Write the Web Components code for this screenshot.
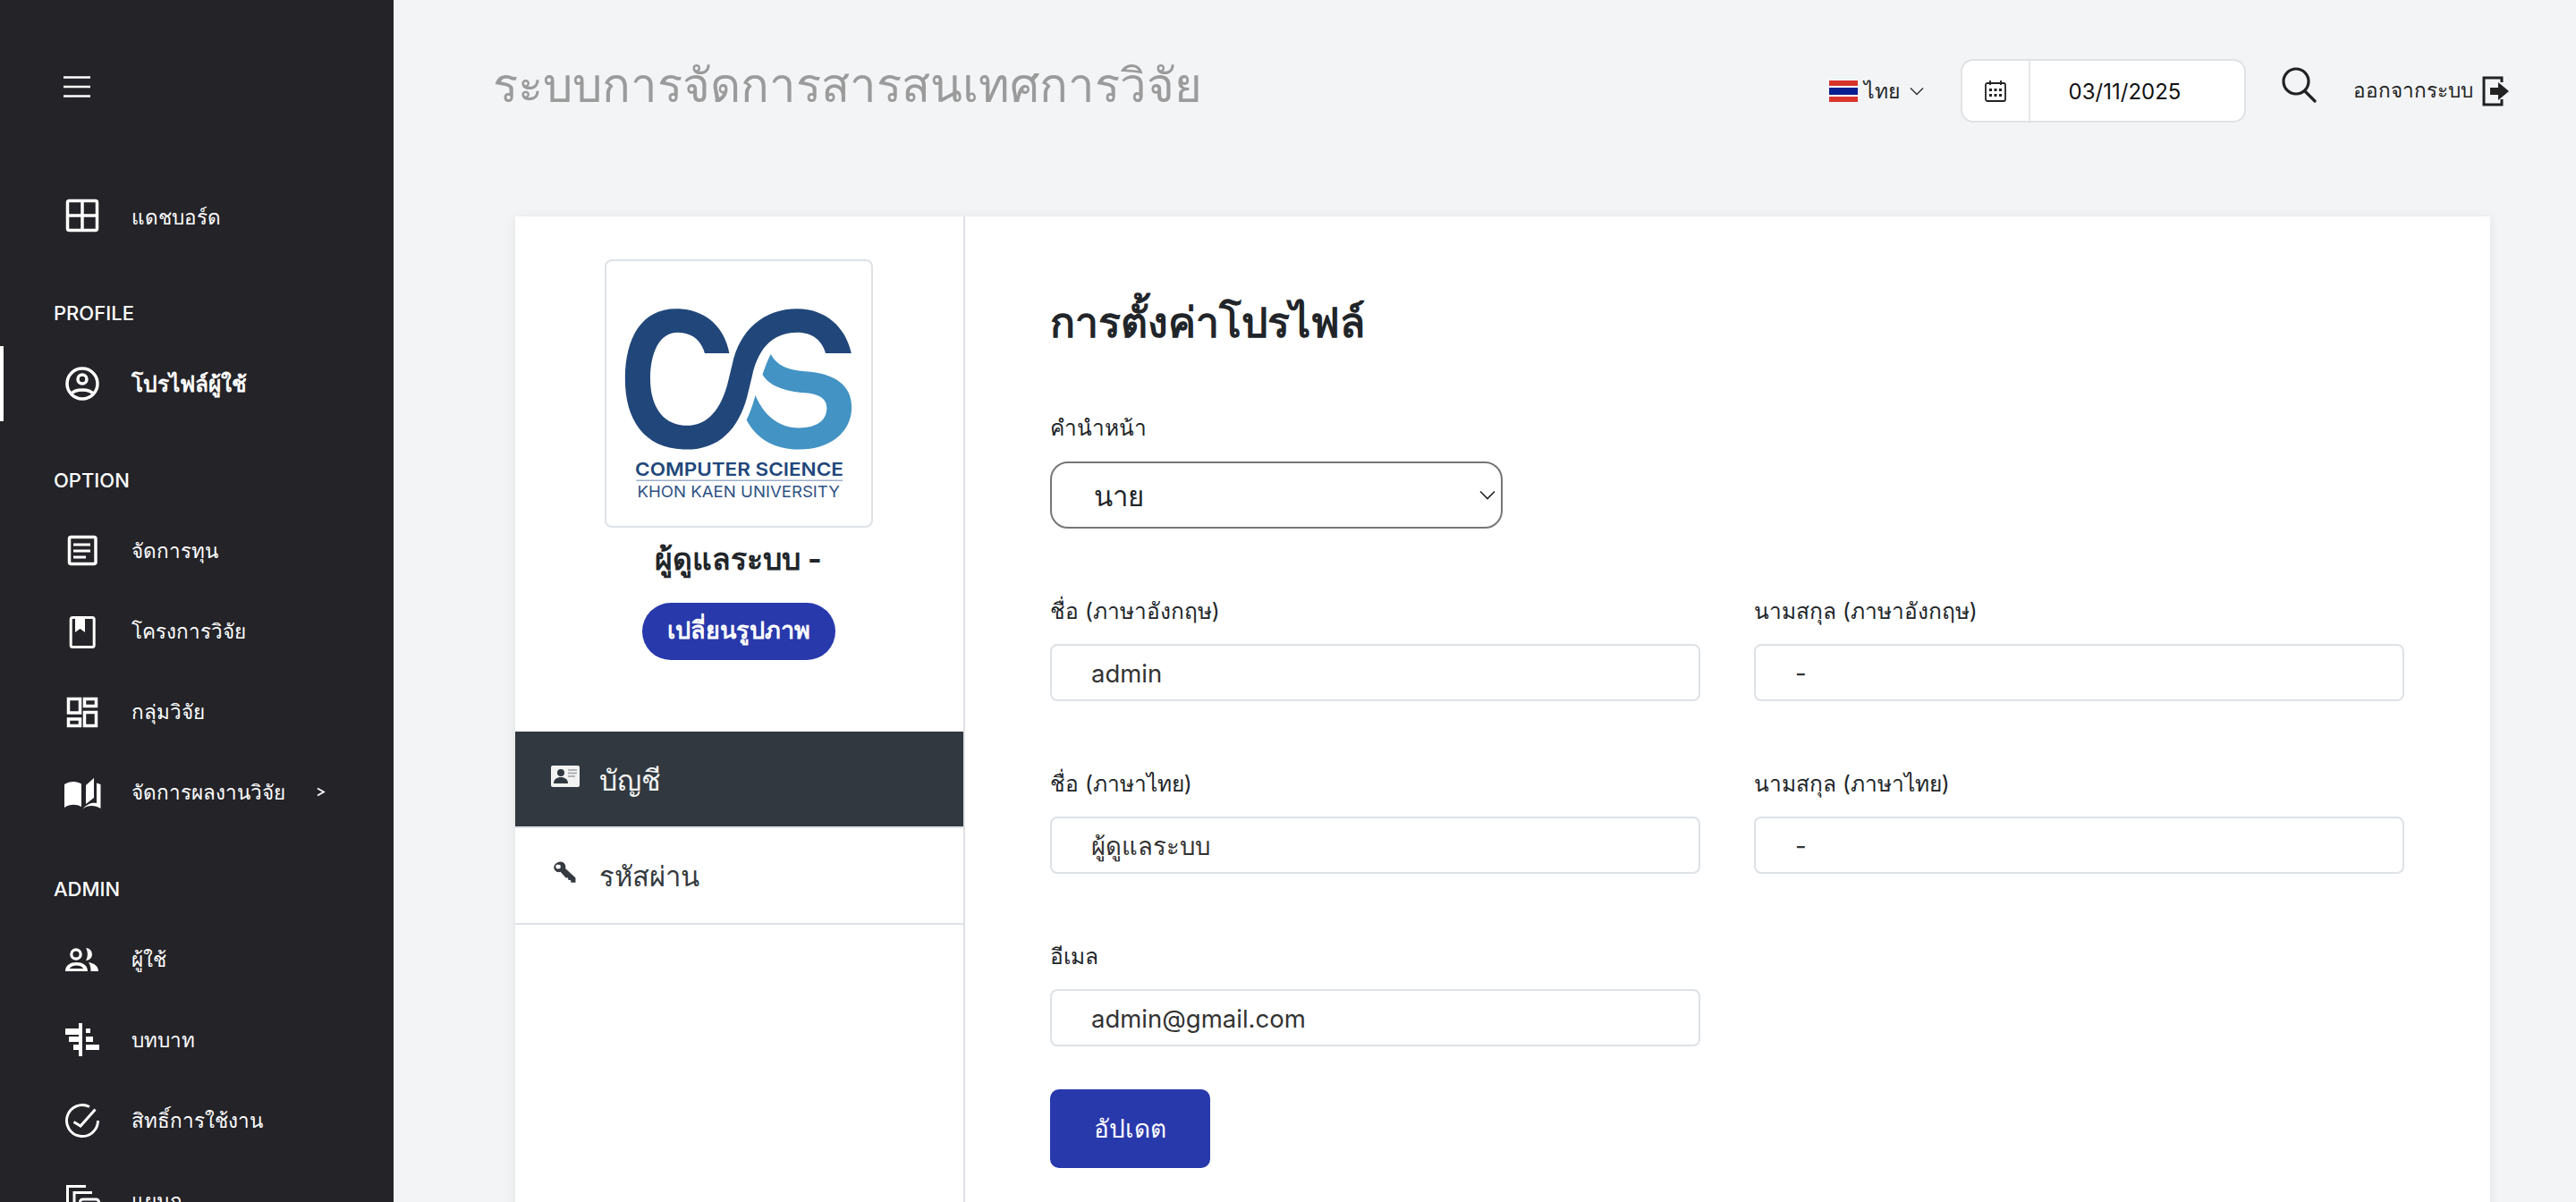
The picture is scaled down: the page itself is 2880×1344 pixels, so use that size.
<!DOCTYPE html>
<html lang="th">
<head>
<meta charset="utf-8">
<title>ระบบการจัดการสารสนเทศการวิจัย</title>
<style>
    html, body { margin: 0; height: 1344px; overflow: hidden; }
    body {
        background: #f3f4f6;
        color: #212529;
        font-family: "Inter", "Liberation Sans", sans-serif;
    }
</style>
</head>
<body>
<app-shell>
    <side-bar slot="side">
        <side-item icon="grid" label="แดชบอร์ด"></side-item>
        <side-section label="PROFILE" style="margin-top:50px">
            <side-item icon="account" label="โปรไฟล์ผู้ใช้" active></side-item>
        </side-section>
        <side-section label="OPTION" style="margin-top:51px">
            <side-item icon="article" label="จัดการทุน"></side-item>
            <side-item icon="bookmark" label="โครงการวิจัย"></side-item>
            <side-item icon="panels" label="กลุ่มวิจัย"></side-item>
            <side-item icon="book" label="จัดการผลงานวิจัย" arrow></side-item>
        </side-section>
        <side-section label="ADMIN" style="margin-top:51px">
            <side-item icon="people" label="ผู้ใช้"></side-item>
            <side-item icon="roles" label="บทบาท"></side-item>
            <side-item icon="check" label="สิทธิ์การใช้งาน"></side-item>
            <side-item icon="layers" label="แผนก"></side-item>
        </side-section>
    </side-bar>
    <top-bar slot="top" heading="ระบบการจัดการสารสนเทศการวิจัย"></top-bar>
    <profile-card slot="main">
        <profile-aside slot="aside" name="ผู้ดูแลระบบ -" action="เปลี่ยนรูปภาพ">
            <profile-tab icon="card" label="บัญชี" active></profile-tab>
            <profile-tab icon="key" label="รหัสผ่าน"></profile-tab>
        </profile-aside>
        <profile-form heading="การตั้งค่าโปรไฟล์" submit="อัปเดต">
            <form-field slot="title" label="คำนำหน้า" value="นาย" select></form-field>
            <form-field label="ชื่อ (ภาษาอังกฤษ)" value="admin"></form-field>
            <form-field label="นามสกุล (ภาษาอังกฤษ)" value="-"></form-field>
            <form-field label="ชื่อ (ภาษาไทย)" value="ผู้ดูแลระบบ"></form-field>
            <form-field label="นามสกุล (ภาษาไทย)" value="-"></form-field>
            <form-field label="อีเมล" value="admin@gmail.com"></form-field>
        </profile-form>
    </profile-card>
</app-shell>

<script>
// sidebar icons, drawn on a 44x44 box
const sideIcons = {
    grid: `<g fill="none" stroke="#fff" stroke-width="3.500"><rect x="5.5" y="3.500" width="33" height="33" rx="2"/><path d="M22 3.500v33M5.5 20h33"/></g>`,
    account: `<g fill="none" stroke="#fff" stroke-width="3.500"><circle cx="22" cy="22" r="17"/><circle cx="22" cy="17" r="5"/><path d="M9.500 33.500C14 27.500 30 27.500 34.500 33.500"/></g>`,
    article: `<g fill="none" stroke="#fff"><rect x="7.500" y="6.500" width="29.500" height="30" rx="2" stroke-width="3.500"/><path d="M12 15h19M12 22h19M12 29h14" stroke-width="3"/></g>`,
    bookmark: `<rect x="9.200" y="6.500" width="26" height="33" rx="2" fill="none" stroke="#fff" stroke-width="3"/><path d="M14 6h11v17l-5.500-4-5.500 4z" fill="#fff"/>`,
    panels: `<g fill="none" stroke="#fff" stroke-width="3.500"><rect x="6.500" y="7.500" width="13" height="15.500"/><rect x="24.500" y="7.500" width="13" height="8"/><rect x="6.500" y="30" width="13" height="7.500"/><rect x="24.500" y="22.500" width="13" height="15"/></g>`,
    book: `<g fill="#fff"><path d="M2 13C8 9 16 9 21 12.500V38C15 35 8 35 2 39z"/><path d="M26 14L35 6V28L26 35z"/><path d="M38 11.500C40 12 41 12.500 42.500 13V40C36 36 28 36 22.500 40.500 28 34 34 33 38 34z"/></g>`,
    people: `<g fill="#fff"><circle cx="15" cy="16" r="5.200" fill="none" stroke="#fff" stroke-width="3.200"/><path d="M26 9a7 7 0 1 1 0 14C28.500 19 28.500 13 26 9z"/><path fill-rule="evenodd" d="M3 35C3 28 9 25 15.500 25S28 28 28 35zM7.500 32h16C21.500 29.500 18.500 28.500 15.500 28.500S9.500 29.500 7.500 32z"/><path d="M29 25C35 26 40 29 40 35H31.500C31.500 31 31 28 29 25z"/></g>`,
    roles: `<g fill="#fff"><rect x="18" y="3" width="4" height="37"/><rect x="3" y="9" width="15" height="7"/><rect x="7" y="18" width="11" height="6"/><rect x="12" y="27" width="6" height="6"/><rect x="26" y="9" width="5" height="5"/><rect x="26" y="18" width="8" height="6"/><rect x="26" y="27" width="15" height="6"/></g>`,
    check: `<g fill="none" stroke="#fff" stroke-width="3"><path d="M39.500 22A17.500 17.500 0 1 1 30 6.500"/><path d="M12.500 23.500L20 28 36.500 9.500"/></g>`,
    layers: `<g fill="none" stroke="#fff" stroke-width="3"><path d="M26 5.500H5.500V37"/><path d="M33 12.500H13V37"/><rect x="19.500" y="20" width="21" height="16" rx="3"/></g>`
}

class AppShell extends HTMLElement {
    constructor() {
        super()
        this.attachShadow({mode: "open"}).innerHTML = `
            <style>
                :host { display: flex; width: 2880px; height: 1344px; overflow: hidden; }
                .content { flex: 1; min-width: 0; display: flex; flex-direction: column; }
            </style>
            <slot name="side"></slot>
            <div class="content">
                <slot name="top"></slot>
                <slot name="main"></slot>
            </div>
        `
    }
}

class SideBar extends HTMLElement {
    constructor() {
        super()
        this.attachShadow({mode: "open"}).innerHTML = `
            <style>
                :host {
                    display: block;
                    flex: none;
                    width: 440px;
                    height: 1344px;
                    overflow: hidden;
                    background: #232328;
                    color: #fff;
                }
                .burger {
                    display: block;
                    width: 30px;
                    height: 24px;
                    margin: 85px 0 92px 71px;
                }
            </style>
            <svg class="burger" viewBox="0 0 30 24" fill="none" stroke="#fff" stroke-width="2.500">
                <path d="M0 1.500h30M0 12h30M0 22.500h30"/>
            </svg>
            <slot></slot>
        `
    }
}

class SideSection extends HTMLElement {
    constructor() {
        super()
        this.attachShadow({mode: "open"}).innerHTML = `
            <style>
                :host { display: block; }
                .label {
                    height: 30px;
                    line-height: 30px;
                    margin: 0 0 22px 60px;
                    font-size: 22px;
                    font-weight: 500;
                }
                .list { display: flex; flex-direction: column; gap: 6px; }
            </style>
            <div class="label">${this.getAttribute("label")}</div>
            <div class="list"><slot></slot></div>
        `
    }
}

class SideItem extends HTMLElement {
    constructor() {
        super()
        this.attachShadow({mode: "open"}).innerHTML = `
            <style>
                :host {
                    display: flex;
                    align-items: center;
                    height: 84px;
                    padding-left: 70px;
                    box-sizing: border-box;
                    font-size: 22.5px;
                    position: relative;
                }
                :host([active]) { font-weight: 600; font-size: 24.5px; }
                :host([active])::before {
                    content: "";
                    position: absolute;
                    left: 0;
                    top: 0;
                    bottom: 0;
                    width: 4px;
                    background: #fff;
                }
                svg.icon { width: 44px; height: 44px; flex: none; overflow: visible; }
                .text { margin-left: 33px; white-space: nowrap; }
                .arrow { position: absolute; left: 353px; top: 27px; width: 12px; height: 30px; }
            </style>
            <svg class="icon" viewBox="0 0 44 44">${sideIcons[this.getAttribute("icon")]}</svg>
            <span class="text">${this.getAttribute("label")}</span>
            ${this.hasAttribute("arrow") ? `<svg class="arrow" viewBox="0 0 12 30" fill="none" stroke="#fff" stroke-width="1.800"><path d="M2 10.500l7 4-7 4"/></svg>` : ""}
        `
    }
}

class TopBar extends HTMLElement {
    constructor() {
        super()
        this.attachShadow({mode: "open"}).innerHTML = `
            <style>
                :host {
                    display: flex;
                    justify-content: space-between;
                    flex: none;
                    height: 242px;
                    box-sizing: border-box;
                    padding: 60px 75px 0 111px;
                }
                h1 {
                    margin: 0;
                    height: 70px;
                    line-height: 70px;
                    font-size: 52.7px;
                    font-weight: 400;
                    color: #9b9b9b;
                    white-space: nowrap;
                }
                .tools { display: flex; align-items: center; height: 71px; margin-top: 6px; }
                .lang { display: flex; align-items: center; width: 106px; font-size: 23px; }
                .lang .flag { width: 32px; height: 24px; flex: none; margin-right: 7px; }
                .lang .chev { width: 16px; height: 10px; margin-left: auto; }
                .date {
                    display: flex;
                    width: 319px;
                    height: 71px;
                    margin-left: 41px;
                    box-sizing: border-box;
                    background: #fff;
                    border: 2px solid #e1e2e4;
                    border-radius: 14px;
                }
                .date .cal {
                    display: flex;
                    align-items: center;
                    justify-content: center;
                    width: 74px;
                    border-right: 2px solid #e6e7e9;
                }
                .date .val { flex: 1; padding-right: 28px; text-align: center; line-height: 69px; font-size: 24px; color: #111; }
                .search { width: 40px; height: 40px; margin: -14px 0 0 39px; }
                .out {
                    display: flex;
                    align-items: center;
                    justify-content: space-between;
                    width: 174px;
                    margin: -2px 0 0 41px;
                    font-size: 22.5px;
                    color: #222;
                    white-space: nowrap;
                }
                .out svg { width: 30px; height: 34px; flex: none; margin-top: 2px; }
            </style>
            <h1>${this.getAttribute("heading")}</h1>
            <div class="tools">
                <div class="lang">
                    <svg class="flag" viewBox="0 0 32 24">
                        <rect width="32" height="24" fill="#fff"/>
                        <rect width="32" height="6" fill="#d9352a"/>
                        <rect y="18" width="32" height="6" fill="#d9352a"/>
                        <rect y="8" width="32" height="8" fill="#0a1f8f"/>
                    </svg>
                    <span>ไทย</span>
                    <svg class="chev" viewBox="0 0 16 10" fill="none" stroke="#333" stroke-width="1.500"><path d="M1 1.500l7 7 7-7"/></svg>
                </div>
                <div class="date">
                    <div class="cal">
                        <svg width="26" height="26" viewBox="0 0 26 26" fill="none" stroke="#222" stroke-width="1.800">
                            <rect x="2" y="4" width="22" height="20" rx="2"/>
                            <path d="M7 1v5M19 1v5"/>
                            <g fill="#222" stroke="none">
                                <rect x="6" y="10" width="3" height="3"/><rect x="11.500" y="10" width="3" height="3"/><rect x="17" y="10" width="3" height="3"/>
                                <rect x="6" y="16" width="3" height="3"/><rect x="11.500" y="16" width="3" height="3"/><rect x="17" y="16" width="3" height="3"/>
                            </g>
                        </svg>
                    </div>
                    <div class="val">03/11/2025</div>
                </div>
                <svg class="search" viewBox="0 0 40 40" fill="none" stroke="#222" stroke-width="3.200">
                    <circle cx="17" cy="16" r="14"/>
                    <path d="M27 27l11 11" stroke-linecap="round"/>
                </svg>
                <div class="out">
                    <span>ออกจากระบบ</span>
                    <svg viewBox="0 0 30 34">
                        <path d="M22 7V2H2v30h20v-6" fill="none" stroke="#222" stroke-width="3"/>
                        <path d="M9 13h9V7l12 10-12 10v-6H9z" fill="#222"/>
                    </svg>
                </div>
            </div>
        `
    }
}

class ProfileCard extends HTMLElement {
    constructor() {
        super()
        this.attachShadow({mode: "open"}).innerHTML = `
            <style>
                :host {
                    display: flex;
                    flex: 1;
                    width: 2208px;
                    min-height: 1200px;
                    margin-left: 136px;
                    background: #fff;
                    box-shadow: 0 2px 12px rgba(0,0,0,.08);
                }
                .aside { flex: none; width: 501px; border-right: 2px solid #dee2e6; }
                .body { flex: 1; min-width: 0; }
            </style>
            <div class="aside"><slot name="aside"></slot></div>
            <div class="body"><slot></slot></div>
        `
    }
}

class ProfileAside extends HTMLElement {
    constructor() {
        super()
        this.attachShadow({mode: "open"}).innerHTML = `
            <style>
                :host { display: block; }
                .top { display: flex; flex-direction: column; align-items: center; padding: 48px 2px 0 0; height: 576px; box-sizing: border-box; }
                .pic {
                    width: 300px;
                    height: 300px;
                    box-sizing: border-box;
                    border: 2px solid #dee2e6;
                    border-radius: 8px;
                    overflow: hidden;
                }
                .pic svg { display: block; width: 296px; height: 296px; }
                .name { margin-top: 10px; height: 50px; line-height: 50px; font-size: 33.7px; font-weight: 700; color: #212529; }
                .btn {
                    margin-top: 24px;
                    width: 216px;
                    height: 64px;
                    line-height: 62px;
                    text-align: center;
                    border-radius: 32px;
                    background: #2839ab;
                    color: #fff;
                    font-size: 27px;
                    font-weight: 600;
                }
            </style>
            <div class="top">
                <div class="pic">
                    <svg viewBox="320 152 894 894">
                        <path fill="#21477a" d="M735 463C718 370 650 313 555 313 440 313 383 410 383 550 383 690 450 788 590 788 700 788 765 720 795 610L812 540C830 460 870 393 965 393 1015 393 1048 420 1060 463H1147C1128 375 1060 313 965 313 850 313 770 385 745 500L728 570C705 650 665 707 590 707 510 707 468 640 468 550 468 460 500 393 560 393 610 393 640 420 652 463z"/>
                        <path fill="#4393c4" d="M875 466C895 505 935 520 990 524 1090 530 1148 570 1148 645 1148 730 1075 788 970 788 885 788 825 750 793 688 805 665 815 635 823 605 850 670 900 715 970 715 1030 715 1064 690 1064 648 1064 615 1035 600 990 597 925 592 870 575 847 535 855 510 865 485 875 466z"/>
                        <text x="417" y="878" textLength="703" lengthAdjust="spacingAndGlyphs" font-family="Inter" font-weight="600" font-size="62" fill="#21477a">COMPUTER SCIENCE</text>
                        <rect x="421" y="891" width="697" height="3" fill="#6d88ad"/>
                        <text x="424" y="950" textLength="684" lengthAdjust="spacingAndGlyphs" font-family="Inter" font-size="54" fill="#2f5285">KHON KAEN UNIVERSITY</text>
                    </svg>
                </div>
                <div class="name">${this.getAttribute("name")}</div>
                <div class="btn">${this.getAttribute("action")}</div>
            </div>
            <slot></slot>
        `
    }
}

class ProfileTab extends HTMLElement {
    constructor() {
        super()
        const icons = {
            card: `<svg viewBox="0 0 32 24"><rect width="32" height="24" rx="2" fill="#f2f2f2"/><circle cx="11" cy="8" r="4" fill="#31383f"/><path d="M3 20c0-5 4-7 8-7s8 2 8 7z" fill="#31383f"/><path d="M19 5h10M19 8.500h10M19 12h8" stroke="#9aa0a5" stroke-width="1.600"/></svg>`,
            key: `<svg viewBox="0 0 32 30" style="width:27px;margin-left:3px"><path fill-rule="evenodd" fill="#343a40" d="M3 3C7-1 13 0 15 4 16 6 16 8 15.500 9.500L29 22V28H23L22.500 25H19.500L19 22H16L9 14C6 15 3 14.500 1 11-.5 8 .5 5 3 3zM6 4.500A2.800 2.800 0 1 0 6 10 2.800 2.800 0 1 0 6 4.500z"/></svg>`
        }
        this.attachShadow({mode: "open"}).innerHTML = `
            <style>
                :host {
                    display: flex;
                    align-items: center;
                    height: 108px;
                    box-sizing: border-box;
                    padding-left: 40px;
                    border-bottom: 2px solid #dee2e6;
                    font-size: 31px;
                    color: #343a40;
                }
                :host([active]) { background: #31383f; color: #f3f3f3; font-size: 32px; }
                .ic { width: 32px; display: flex; margin-top: -6px; }
                .ic svg { width: 32px; }
                span { margin-left: 22px; position: relative; top: 1px; }
            </style>
            <div class="ic">${icons[this.getAttribute("icon")]}</div>
            <span>${this.getAttribute("label")}</span>
        `
    }
}

class ProfileForm extends HTMLElement {
    constructor() {
        super()
        this.attachShadow({mode: "open"}).innerHTML = `
            <style>
                :host { display: block; padding: 80px 95px 80px 95px; }
                h2 { margin: 0 0 62px; height: 76px; line-height: 76px; font-size: 46.3px; font-weight: 700; color: #212529; }
                .title { display: block; width: 506px; margin-bottom: 74px; }
                .grid { display: grid; grid-template-columns: 727px 727px; column-gap: 60px; row-gap: 74px; }
                .btn {
                    margin-top: 48px;
                    width: 179px;
                    height: 88px;
                    line-height: 88px;
                    text-align: center;
                    border-radius: 10px;
                    background: #2839ab;
                    color: #fff;
                    font-size: 28px;
                }
            </style>
            <h2>${this.getAttribute("heading")}</h2>
            <div class="title"><slot name="title"></slot></div>
            <div class="grid"><slot></slot></div>
            <div class="btn">${this.getAttribute("submit")}</div>
        `
    }
}

class FormField extends HTMLElement {
    constructor() {
        super()
        const select = this.hasAttribute("select")
        this.attachShadow({mode: "open"}).innerHTML = `
            <style>
                :host { display: block; }
                label { display: block; height: 34px; line-height: 36px; font-size: 24.5px; color: #212529; }
                .box {
                    display: flex;
                    align-items: center;
                    height: 64px;
                    margin-top: 21px;
                    padding-left: 44px;
                    box-sizing: border-box;
                    background: #fff;
                    border: 2px solid #dee2e6;
                    border-radius: 8px;
                    font-size: 27.5px;
                    line-height: 64px;
                    color: #333;
                }
                .box span { position: relative; top: 1px; }
                .box.sel {
                    position: relative;
                    height: 75px;
                    margin-top: 22px;
                    padding-left: 47px;
                    border-color: #767676;
                    border-radius: 20px;
                    font-size: 31px;
                    color: #212529;
                }
                .sel svg { position: absolute; right: 6px; top: 30px; width: 18px; height: 12px; }
            </style>
            <label>${this.getAttribute("label")}</label>
            <div class="box ${select ? "sel" : ""}">
                <span>${this.getAttribute("value")}</span>
                ${select ? `<svg viewBox="0 0 18 12" fill="none" stroke="#222" stroke-width="1.600"><path d="M1 1.500l8 8 8-8"/></svg>` : ""}
            </div>
        `
    }
}

customElements.define("app-shell", AppShell)
customElements.define("side-bar", SideBar)
customElements.define("side-section", SideSection)
customElements.define("side-item", SideItem)
customElements.define("top-bar", TopBar)
customElements.define("profile-card", ProfileCard)
customElements.define("profile-aside", ProfileAside)
customElements.define("profile-tab", ProfileTab)
customElements.define("profile-form", ProfileForm)
customElements.define("form-field", FormField)
</script>
</body>
</html>
